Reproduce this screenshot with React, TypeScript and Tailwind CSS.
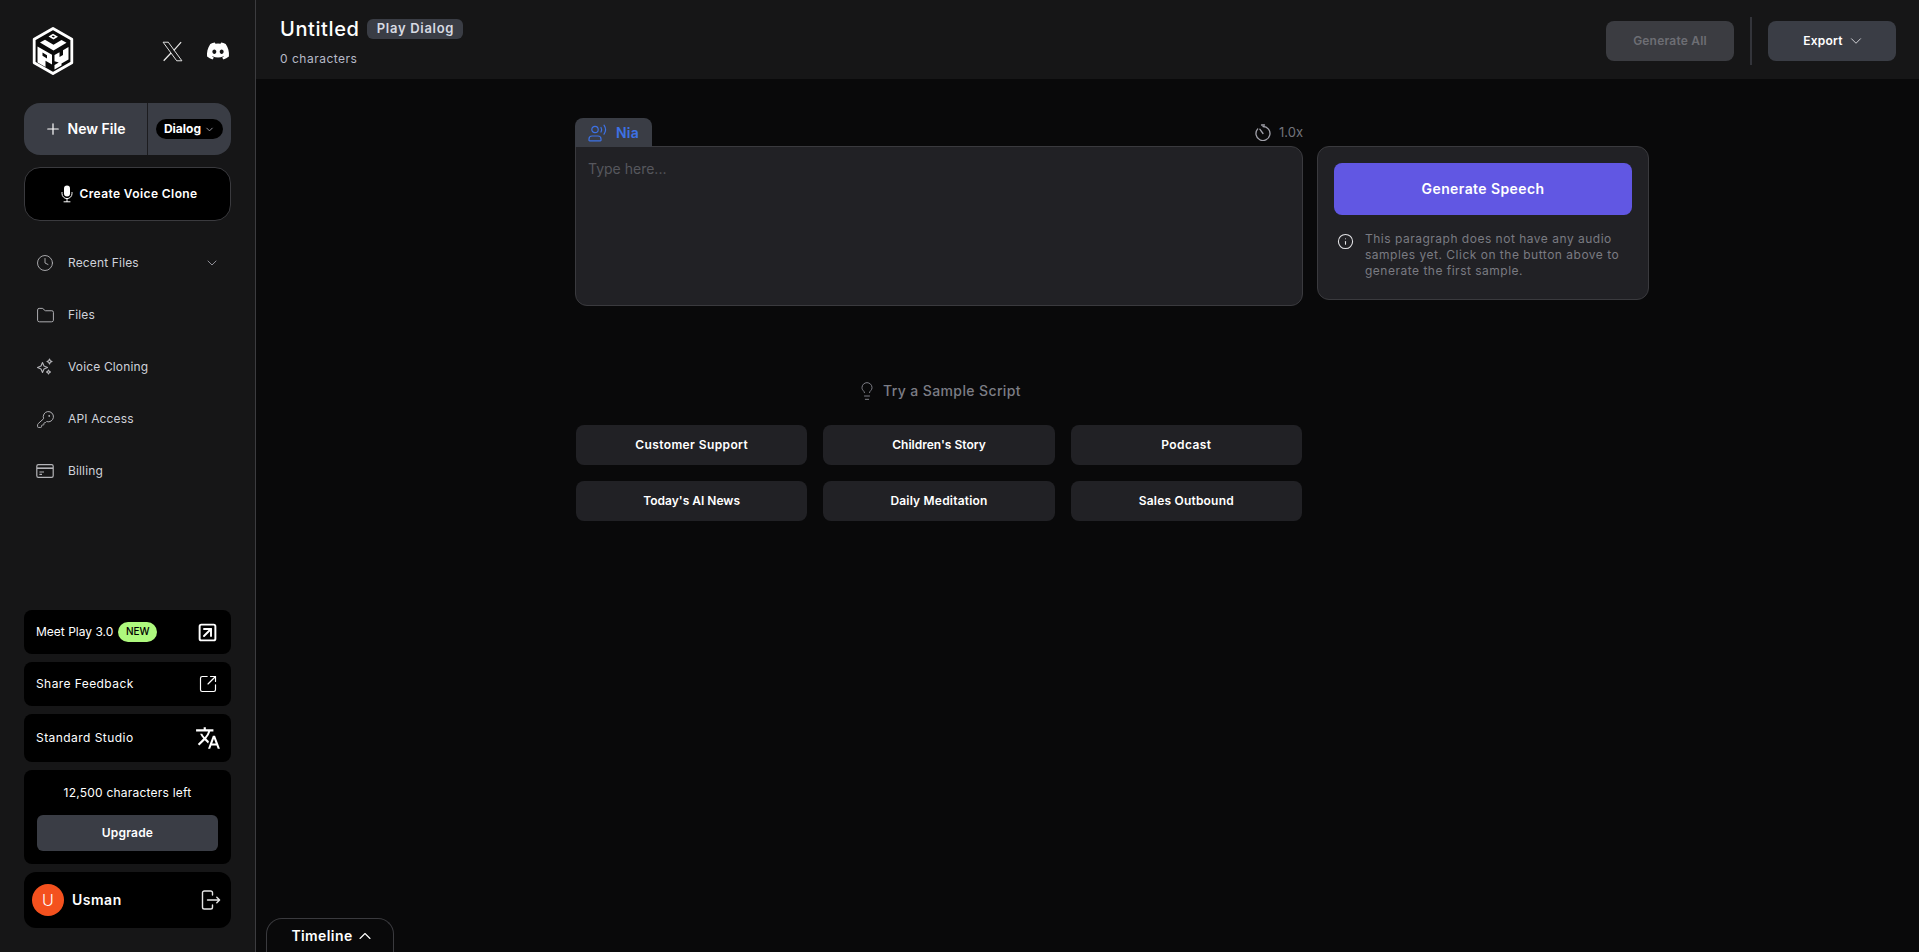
import React from "react";
import { ChevronDown, ChevronUp, Clock, Folder, Info, KeyRound, Lightbulb, Plus, SquareArrowOutUpRight, SquareArrowUpRight } from "lucide-react";
import { FaDiscord } from "react-icons/fa6";
import { MdTranslate } from "react-icons/md";

function Logo() {
  return (
    <svg width="42" height="48" viewBox="0 0 42 48" fill="none">
      <path d="M21 1.5 39.8 12.3V35.7L21 46.5 2.2 35.7V12.3Z" fill="#0a0a0a" stroke="#fff" strokeWidth="2.8" strokeLinejoin="round" />
      <path fillRule="evenodd" fill="#fff" d="M5.5 19.5 20 27.8V37.5L13.5 33.8V40L5.5 35.5ZM10.5 25.6V28.8L15 31.4V28.2Z" />
      <path fill="#fff" d="M22.5 28 27.5 25.2V30L31 28V23.2L36.5 20V32.5L29.5 36.5V38.5L22.5 42.5V38L26.8 35.6 22.5 34.2Z" />
      <path fill="#fff" d="M8 15.5 13 12.8 21.5 17.8 29.5 13.1 34.5 15.8 21.5 23.4Z" />
      <path fill="#fff" fillRule="evenodd" d="M16.5 9.5 21 6.8 26 9.8 21.5 12.4ZM19.6 9.4 21.5 10.5 23 9.7 21 8.6Z" />
    </svg>
  );
}

function XLogo() {
  return (
    <svg width="23" height="23" viewBox="0 0 24 24" fill="none" stroke="#e8e8e8" strokeWidth="1" strokeLinejoin="miter">
      <path d="M2.2 2.3H7.6L21.8 21.7H16.4Z" />
      <path d="M21 2.3 13.4 10.8M10.4 13.6 2.8 21.7" strokeWidth="1.3" />
    </svg>
  );
}

function Sparkle() {
  return (
    <svg width="18" height="18" viewBox="0 0 18 18" fill="none" stroke="currentColor" strokeWidth="1.1" strokeLinejoin="round">
      <path d="M6.5 4.5 8 8 11.5 9.5 8 11 6.5 14.5 5 11 1.5 9.5 5 8Z" />
      <path d="M13.5 1 14.3 2.7 16 3.5 14.3 4.3 13.5 6 12.7 4.3 11 3.5 12.7 2.7Z" />
      <path d="M12.5 12 13.2 13.3 14.5 14 13.2 14.7 12.5 16 11.8 14.7 10.5 14 11.8 13.3Z" />
    </svg>
  );
}

function Card() {
  return (
    <svg width="18" height="18" viewBox="0 0 18 18" fill="none" stroke="currentColor" strokeWidth="1.2">
      <rect x="0.8" y="2.6" width="16.4" height="12.8" rx="1.6" />
      <path d="M1 6.2H17" strokeWidth="1.6" />
      <path d="M3.4 10H8M3.4 12.4H6" />
    </svg>
  );
}

function Mic() {
  return (
    <svg width="12" height="18" viewBox="0 0 12 18" fill="none">
      <rect x="3" y="0.5" width="6" height="11" rx="3" fill="#fff" />
      <path d="M1 7.5V8.6A5 5 0 0 0 11 8.6V7.5M6 13.6V16.6M3 16.8H9" stroke="#fff" strokeWidth="1" strokeLinecap="round" />
    </svg>
  );
}

function Speaker() {
  return (
    <svg width="20" height="18" viewBox="0 0 20 18" fill="none" stroke="#3d72e6" strokeWidth="1.2" strokeLinecap="round">
      <circle cx="7" cy="5.5" r="3.2" />
      <path d="M1 16.2V15A3 3 0 0 1 4 12H10A3 3 0 0 1 13 15V16.2A.6.6 0 0 1 12.4 16.8H1.6A.6.6 0 0 1 1 16.2Z" />
      <path d="M13 3.5A4.5 4.5 0 0 1 13 8M16 1.2A8 8 0 0 1 16 10.2" />
    </svg>
  );
}

function Speed() {
  return (
    <svg width="16" height="17" viewBox="0 0 16 17" fill="none" stroke="#a1a1aa" strokeWidth="1.3" strokeLinecap="round">
      <path d="M8 2.5A7 7 0 1 1 2.7 4.9" />
      <path d="M8 9.5 4.8 5.2M6.5 1H9.5" />
    </svg>
  );
}

function Logout() {
  return (
    <svg width="20" height="20" viewBox="0 0 20 20" fill="none" stroke="#e5e5e5" strokeWidth="1.4" strokeLinecap="round" strokeLinejoin="round">
      <path d="M11.5 5V2.8A1.8 1.8 0 0 0 9.7 1H3.3A1.8 1.8 0 0 0 1.5 2.8V17.2A1.8 1.8 0 0 0 3.3 19H9.7A1.8 1.8 0 0 0 11.5 17.2V15" />
      <path d="M6.5 10H18.5M15.8 7.2 18.6 10 15.8 12.8" />
    </svg>
  );
}

const nav: [React.ReactNode, string][] = [
  [<Clock size={18} strokeWidth={1.2} />, "Recent Files"],
  [<Folder size={19} strokeWidth={1.2} />, "Files"],
  [<Sparkle />, "Voice Cloning"],
  [<KeyRound size={19} strokeWidth={1.2} />, "API Access"],
  [<Card />, "Billing"],
];

const samples: [string, string][] = [
  ["Customer Support", "tracking-[0.4px]"],
  ["Children's Story", "tracking-normal"],
  ["Podcast", "tracking-[0.4px]"],
  ["Today's AI News", "tracking-normal"],
  ["Daily Meditation", "tracking-[0.2px]"],
  ["Sales Outbound", "tracking-[0.2px]"],
];

export default function App() {
  return (
    <div className="flex h-screen w-full overflow-hidden bg-[#09090a] font-['Inter','Noto_Sans',sans-serif] text-white">
      <aside className="flex h-full w-[256px] shrink-0 flex-col border-r border-[#3c3c3f] bg-[#161617] px-6">
        <div className="mt-[27px] flex h-[48px] items-center justify-between">
          <div className="ml-2"><Logo /></div>
          <div className="flex items-center gap-[22px] pr-px">
            <XLogo />
            <FaDiscord size={24} color="#fff" />
          </div>
        </div>

        <div className="mt-7 flex h-[52px] w-[207px] rounded-2xl bg-[#3a3d45]">
          <div className="flex w-[124px] items-center justify-center gap-[6px] border-r border-[#1c1c1f] pr-[2px] text-sm font-semibold">
            <Plus size={18} strokeWidth={1.6} />
            New File
          </div>
          <div className="flex flex-1 items-center justify-center">
            <div className="flex h-5 w-[67px] items-center justify-center gap-[3px] rounded-full bg-black text-xs font-bold">
              Dialog
              <ChevronDown size={11} color="#a1a1aa" />
            </div>
          </div>
        </div>

        <div className="mt-3 flex h-[54px] w-[207px] items-center justify-center gap-[6px] rounded-2xl border border-[#3a3a3e] bg-black pl-[4px] text-xs font-semibold tracking-[0.4px]">
          <Mic />
          Create Voice Clone
        </div>

        <nav className="mt-[16px] flex flex-col">
          {nav.map(([icon, label], i) => (
            <div key={label} className="flex h-[52px] items-center pl-[12px] pr-[11px] text-xs tracking-[0.15px] text-[#cfd2da]">
              <span className="flex w-[32px] text-[#b4b4b8]">{icon}</span>
              <span className="flex-1">{label}</span>
              {i === 0 && <ChevronDown size={16} strokeWidth={1.3} color="#a1a1aa" />}
            </div>
          ))}
        </nav>

        <div className="mt-auto flex flex-col gap-2 pb-6">
          <div className="flex h-11 items-center justify-between rounded-lg bg-black pl-3 pr-[13px] text-xs">
            <div className="flex items-center gap-[5px]">
              Meet Play 3.0
              <span className="flex h-5 w-[39px] items-center justify-center rounded-full bg-[#aef97e] text-[10px] font-medium text-black">NEW</span>
            </div>
            <SquareArrowUpRight size={21} strokeWidth={2.2} />
          </div>
          <div className="flex h-11 items-center justify-between rounded-lg bg-black pl-3 pr-[13px] text-xs tracking-[0.42px]">
            Share Feedback
            <SquareArrowOutUpRight size={20} strokeWidth={1.4} />
          </div>
          <div className="flex h-12 items-center justify-between rounded-lg bg-black pl-3 pr-[10px] text-xs tracking-[0.45px]">
            Standard Studio
            <MdTranslate size={26} />
          </div>
          <div className="flex h-[94px] flex-col items-center rounded-lg bg-black px-[13px] pt-[13px] text-xs">
            <div className="leading-[20px] tracking-[0.22px]">12,500 characters left</div>
            <div className="mt-[12px] flex h-9 w-full items-center justify-center rounded-md bg-[#3a3d45] font-semibold tracking-[0.2px]">Upgrade</div>
          </div>
          <div className="flex h-14 items-center rounded-xl bg-black pl-2 pr-[10px]">
            <div className="flex size-8 items-center justify-center rounded-full bg-[#f4511e] text-base font-light">U</div>
            <div className="ml-2 flex-1 text-sm font-semibold tracking-[0.5px]">Usman</div>
            <Logout />
          </div>
        </div>
      </aside>

      <main className="flex h-full flex-1 flex-col">
        <header className="flex h-[79px] shrink-0 items-start justify-between bg-[#161617] pl-6 pr-[23px]">
          <div>
            <div className="mt-[19px] flex h-5 items-center gap-2">
              <span className="text-xl font-medium tracking-[0.6px]">Untitled</span>
              <span className="flex h-5 w-[96px] items-center justify-center rounded-md bg-[#3a3d45] text-[13px] font-semibold tracking-[0.7px] text-[#d7dae2]">Play Dialog</span>
            </div>
            <div className="mt-3 text-xs leading-4 tracking-[0.5px] text-[#b6bac8]">0 characters</div>
          </div>
          <div className="mt-[17px] flex items-start">
            <div className="mt-1 flex h-10 w-[128px] items-center justify-center rounded-lg bg-[#3b3c41] text-xs font-semibold tracking-[0.2px] text-[#6d6e74]">Generate All</div>
            <div className="mx-4 h-12 w-0.5 bg-[#33343a]" />
            <div className="mt-1 flex h-10 w-[128px] items-center justify-center gap-[4px] rounded-lg bg-[#3a3d45] pl-[4px] text-xs font-semibold tracking-[0.2px]">
              Export
              <ChevronDown size={18} strokeWidth={1.3} color="#d4d4d8" />
            </div>
          </div>
        </header>

        <div className="flex-1 pl-[319px] pt-[39px]">
          <div className="flex items-start gap-[14px]">
            <div className="w-[728px]">
              <div className="flex items-center justify-between">
                <div className="flex h-[29px] w-[77px] items-center justify-center gap-[8px] rounded-t-lg bg-[#3a3d45] text-sm font-semibold tracking-[0.2px] text-[#3d72e6]">
                  <Speaker />
                  Nia
                </div>
                <div className="flex items-center gap-2 text-[13px] text-[#72747c]">
                  <Speed />
                  1.0x
                </div>
              </div>
              <div className="-mt-px h-[160px] rounded-b-xl rounded-tr-xl border border-[#3a3a3e] bg-[#212125] px-3 pb-[10px] pt-3 text-sm leading-5 text-[#56575d]">Type here...</div>
            </div>
            <div className="mt-[28px] h-[154px] w-[332px] rounded-xl border border-[#3a3a3e] bg-[#212125] px-4 pt-4">
              <div className="flex h-[52px] items-center justify-center rounded-lg bg-[#6157e3] text-sm font-semibold tracking-[0.4px]">Generate Speech</div>
              <div className="mt-4 flex gap-[11px] pl-[3px]">
                <Info size={17} strokeWidth={1.5} color="#e4e4e7" className="mt-[2px] shrink-0" />
                <p className="text-xs leading-4 tracking-[0.5px] text-[#7a7b82]">This paragraph does not have any audio samples yet. Click on the button above to generate the first sample.</p>
              </div>
            </div>
          </div>

          <div className="mt-[75px] w-[728px] px-px">
            <div className="flex h-5 items-center justify-center gap-[6px] text-sm font-medium tracking-[0.38px] text-[#7c7d85]">
              <Lightbulb size={20} strokeWidth={1.2} />
              Try a Sample Script
            </div>
            <div className="mt-6 grid grid-cols-3 gap-4">
              {samples.map(([s, track]) => (
                <div key={s} className={`flex h-10 items-center justify-center rounded-lg bg-[#212125] text-xs font-semibold ${track}`}>{s}</div>
              ))}
            </div>
          </div>
        </div>

        <div className="ml-[10px] flex h-[34px] w-[128px] shrink-0 items-start justify-center gap-[2px] rounded-t-2xl border border-b-0 border-[#3a3a3e] pl-[6px] pt-[7px] text-sm font-semibold leading-5 tracking-[0.4px]">
          Timeline
          <ChevronUp size={20} strokeWidth={1.3} />
        </div>
      </main>
    </div>
  );
}
